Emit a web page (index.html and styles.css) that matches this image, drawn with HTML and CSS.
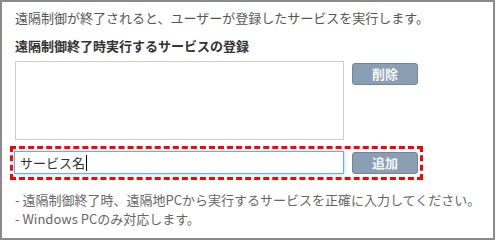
FILE: index.html
```html
<!DOCTYPE html>
<html lang="ja">
<head>
<meta charset="utf-8">
<title>遠隔制御終了時実行するサービスの登録</title>
<link rel="stylesheet" href="styles.css">
</head>
<body>
<div class="panel">
  <p class="intro">遠隔制御が終了されると、ユーザーが登録したサービスを実行します。</p>
  <h2 class="heading">遠隔制御終了時実行するサービスの登録</h2>
  <div class="list-row">
    <div class="list-box"></div>
    <button class="btn btn-top" type="button">削除</button>
  </div>
  <div class="add-row">
    <div class="text-input"><span class="value">サービス名</span><span class="caret"></span></div>
    <button class="btn" type="button">追加</button>
  </div>
  <ul class="notes">
    <li>- 遠隔制御終了時、遠隔地PCから実行するサービスを正確に入力してください。</li>
    <li>- Windows PCのみ対応します。</li>
  </ul>
</div>
</body>
</html>
```

FILE: styles.css
```css
html, body {
  margin: 0;
  padding: 0;
  background: #ffffff;
}

body {
  font-family: "Noto Sans CJK JP", "Noto Sans", "Liberation Sans", sans-serif;
  font-size: 13px;
  color: #555555;
}

.panel {
  box-sizing: border-box;
  width: 495px;
  height: 240px;
  border: 2px solid #8a8a8a;
  padding: 7px 0 0 13px;
}

.intro {
  margin: 0;
  line-height: 18px;
  color: #555555;
}

.heading {
  margin: 10px 0 0 0;
  font-size: 13px;
  line-height: 18px;
  font-weight: bold;
  color: #333333;
}

.list-row {
  display: flex;
  align-items: flex-start;
  gap: 8px;
  margin-top: 6px;
}

.list-box {
  box-sizing: border-box;
  width: 329px;
  height: 79px;
  border: 1px solid #cccccc;
  background: #ffffff;
}

.btn {
  box-sizing: border-box;
  width: 66px;
  height: 22px;
  padding: 0;
  border: 1px solid #71869b;
  border-radius: 3px;
  background: #8a9fb3;
  color: #f4f6f8;
  font-family: inherit;
  font-size: 13px;
  font-weight: bold;
  line-height: 20px;
}

.btn-top {
  margin-top: 2px;
}

.add-row {
  display: flex;
  align-items: center;
  gap: 8px;
  width: fit-content;
  margin: 6px 0 0 -5px;
  padding: 2px 2px 3px 1px;
  border: 3px dashed #ff0000;
}

.text-input {
  box-sizing: border-box;
  width: 330px;
  height: 23px;
  border: 1px solid #66afe9;
  box-shadow: 0 0 4px rgba(102, 175, 233, 0.6);
  padding: 0 5px;
  display: flex;
  align-items: center;
  color: #333333;
  font-size: 13px;
}

.caret {
  display: inline-block;
  width: 1px;
  height: 16px;
  background: #000000;
  margin-left: 1px;
}

.notes {
  list-style: none;
  margin: 10px 0 0 0;
  padding: 0;
  line-height: 19px;
  color: #666666;
}
```
